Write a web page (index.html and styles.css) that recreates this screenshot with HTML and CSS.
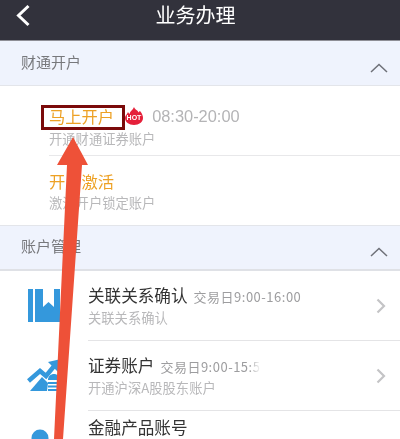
FILE: index.html
```html
<!DOCTYPE html>
<html lang="zh">
<head>
<meta charset="utf-8">
<title>业务办理</title>
<link rel="stylesheet" href="styles.css">
</head>
<body>
<div class="page">
  <header class="topbar">
    <svg class="back" viewBox="0 0 14 24" aria-hidden="true"><path d="M12.500 2 L2.500 11.500 L12.500 21" fill="none" stroke="#fff" stroke-width="3"/></svg>
    <h1 class="title">业务办理</h1>
  </header>

  <section class="group-head">
    <span>财通开户</span>
    <svg class="caret" viewBox="0 0 18 10" aria-hidden="true"><path d="M1 9 L9 1.500 L17 9" fill="none" stroke="#6e7078" stroke-width="1.500"/></svg>
  </section>
  <div class="open-list">
    <div class="open-row">
      <div class="open-title">
        <span class="name boxed">马上开户</span>
        <svg class="hot" viewBox="0 0 18 18" aria-hidden="true">
          <path d="M9 0 C10 3 13 3 13.500 5.500 C14 4.500 14.500 4.500 15 4 C17.500 7 18 9 18 11 C18 15 14 18 9 18 C4 18 0 15 0 11 C0 8.500 2 7.500 3 5 C3.500 6 4 6.500 4.500 7 C5 4 8 3 9 0 Z" fill="#e5203a"/>
          <text x="9" y="13" text-anchor="middle" class="hot-text">HOT</text>
        </svg>
        <span class="time">08:30-20:00</span>
      </div>
      <div class="desc">开通财通证券账户</div>
    </div>
    <div class="open-row last">
      <div class="open-title"><span class="name">开户激活</span></div>
      <div class="desc">激活开户锁定账户</div>
    </div>
  </div>

  <section class="group-head second">
    <span>账户管理</span>
    <svg class="caret" viewBox="0 0 18 10" aria-hidden="true"><path d="M1 9 L9 1.500 L17 9" fill="none" stroke="#6e7078" stroke-width="1.500"/></svg>
  </section>
  <div class="acct-list">
    <div class="acct-row">
      <svg class="acct-icon book" viewBox="0 0 34 36" aria-hidden="true">
        <path d="M1 2 H6 V35 H1 Z M8 2 H16 V20 L21.500 15 L27 20 V2 H33 V35 H8 Z" fill="#3498dc"/>
      </svg>
      <div class="acct-body">
        <div class="acct-title"><span class="acct-name">关联关系确认</span><span class="hours">交易日9:00-16:00</span></div>
        <div class="desc">关联关系确认</div>
      </div>
      <svg class="chev" viewBox="0 0 10 16" aria-hidden="true"><path d="M1.500 1.500 L8 8 L1.500 14.500" fill="none" stroke="#c4c4c6" stroke-width="2.200"/></svg>
    </div>
    <div class="acct-row">
      <svg class="acct-icon chart" viewBox="0 0 34 40" aria-hidden="true">
        <path d="M1.500 25 L13 15 L19 20 L28 9" fill="none" stroke="#3498dc" stroke-width="4.500"/>
        <path d="M21 6 L34 3 L32 17 Z" fill="#3498dc"/>
        <path d="M3 35 L15 21 L21 27 L20 35 Z" fill="#3498dc"/>
        <path d="M21 24 C21 16 33 16 33 24 Z M21 26 H33 V28 H21 Z M21 29.500 H33 V31.500 H21 Z M21 33 H33 V35 H21 Z" fill="#3498dc"/>
      </svg>
      <div class="acct-body">
        <div class="acct-title"><span class="acct-name">证券账户</span><span class="hours clip">交易日9:00-15:5</span></div>
        <div class="desc">开通沪深A股股东账户</div>
      </div>
      <svg class="chev" viewBox="0 0 10 16" aria-hidden="true"><path d="M1.500 1.500 L8 8 L1.500 14.500" fill="none" stroke="#c4c4c6" stroke-width="2.200"/></svg>
    </div>
    <div class="acct-row tail">
      <svg class="acct-icon person" viewBox="0 0 34 40" aria-hidden="true"><circle cx="13" cy="9" r="8.500" fill="#3498dc"/><path d="M0 40 C0 24 26 24 26 40 Z" fill="#3498dc"/></svg>
      <div class="acct-body">
        <div class="acct-title"><span class="acct-name">金融产品账号</span></div>
      </div>
    </div>
  </div>

  <svg class="annot-arrow" viewBox="0 0 400 439" aria-hidden="true">
    <path d="M73 137 L88 165 L82 165 L63 439 L54 439 L67 165 L57 165 Z" fill="#ee5138"/>
  </svg>
</div>
</body>
</html>
```
FILE: styles.css
```css
* { box-sizing: border-box; }
html, body { margin: 0; padding: 0; }
body {
  font-family: "Noto Sans CJK SC", "Noto Sans", sans-serif;
  background: #fff;
}
.page {
  position: relative;
  width: 400px;
  height: 439px;
  overflow: hidden;
  background: #fff;
  filter: blur(0.3px);
}
.topbar {
  position: relative;
  height: 41px;
  background: #32323c;
  border-bottom: 1px solid #8e8e96;
  display: flex;
  align-items: center;
  justify-content: center;
  padding-right: 9px;
}
.back {
  position: absolute;
  left: 15px;
  top: 4px;
  width: 16px;
  height: 24px;
}
.title {
  margin: -10px 0 0;
  font-size: 20px;
  font-weight: 400;
  line-height: 28px;
  color: #fff;
}
.group-head {
  height: 45px;
  background: #eff3fd;
  border-bottom: 1px solid #e3e5ea;
  padding: 0 12px 0 21px;
  display: flex;
  align-items: center;
  justify-content: space-between;
  font-size: 15px;
  color: #77787c;
}
.group-head span { margin-top: -4px; }
.caret { width: 18px; height: 10px; margin-top: 10px; }
.group-head.second {
  height: 46px;
  border-top: 1px solid #e3e5ea;
  border-bottom: 2px solid #dfe1e6;
}
.second .caret { margin-top: 8px; }
.open-list { padding-left: 49px; }
.open-row {
  height: 70px;
  padding-top: 18px;
  border-bottom: 1px solid #e8e8ea;
}
.open-row .desc { margin-top: 1px; }
.open-row.last { height: 69px; border-bottom: 0; padding-top: 13px; }
.open-row.last .desc { margin-top: 0; }
.open-title {
  display: flex;
  align-items: center;
  height: 24px;
}
.name {
  font-size: 16.3px;
  line-height: 24px;
  color: #eda125;
}
.boxed { position: relative; }
.boxed::after {
  content: "";
  box-sizing: border-box;
  position: absolute;
  left: -8px;
  top: 1px;
  width: 84px;
  height: 25px;
  border: 3px solid #7b0a0a;
}
.hot { width: 18px; height: 18px; margin-left: 11px; }
.hot-text { font: 700 7px "Liberation Sans", sans-serif; fill: #fff; }
.time {
  margin-left: 9px;
  font-family: "Liberation Sans", sans-serif;
  font-size: 16.4px;
  color: #b4b4b6;
}
.desc {
  font-size: 13.3px;
  line-height: 20px;
  color: #b8b8ba;
}
.acct-list { padding-left: 27px; }
.acct-row {
  height: 70px;
  display: flex;
  align-items: center;
}
.acct-icon { width: 34px; height: 36px; flex: none; }
.book { margin-top: -2px; }
.chart { height: 40px; }
.person { height: 40px; align-self: flex-start; margin-top: 18px; }
.acct-body {
  flex: 1;
  height: 100%;
  margin-left: 27px;
  padding-top: 12px;
  border-bottom: 1px solid #e4e4e6;
}
.acct-body .desc { margin-top: -1px; }
.tail .acct-body { padding-top: 4px; border-bottom: 0; }
.acct-title { display: flex; align-items: baseline; line-height: 25px; }
.acct-name { font-size: 16.6px; color: #333; }
.hours {
  margin-left: 6px;
  font-size: 13px;
  letter-spacing: 0.5px;
  color: #9d9d9f;
}
.clip {
  width: 101px;
  white-space: nowrap;
  overflow: hidden;
  -webkit-mask-image: linear-gradient(90deg, #000 88%, transparent 100%);
  mask-image: linear-gradient(90deg, #000 88%, transparent 100%);
}
.chev {
  position: absolute;
  right: 14px;
  width: 10px;
  height: 16px;
}
.annot-arrow {
  position: absolute;
  inset: 0;
  width: 400px;
  height: 439px;
  pointer-events: none;
}
```
